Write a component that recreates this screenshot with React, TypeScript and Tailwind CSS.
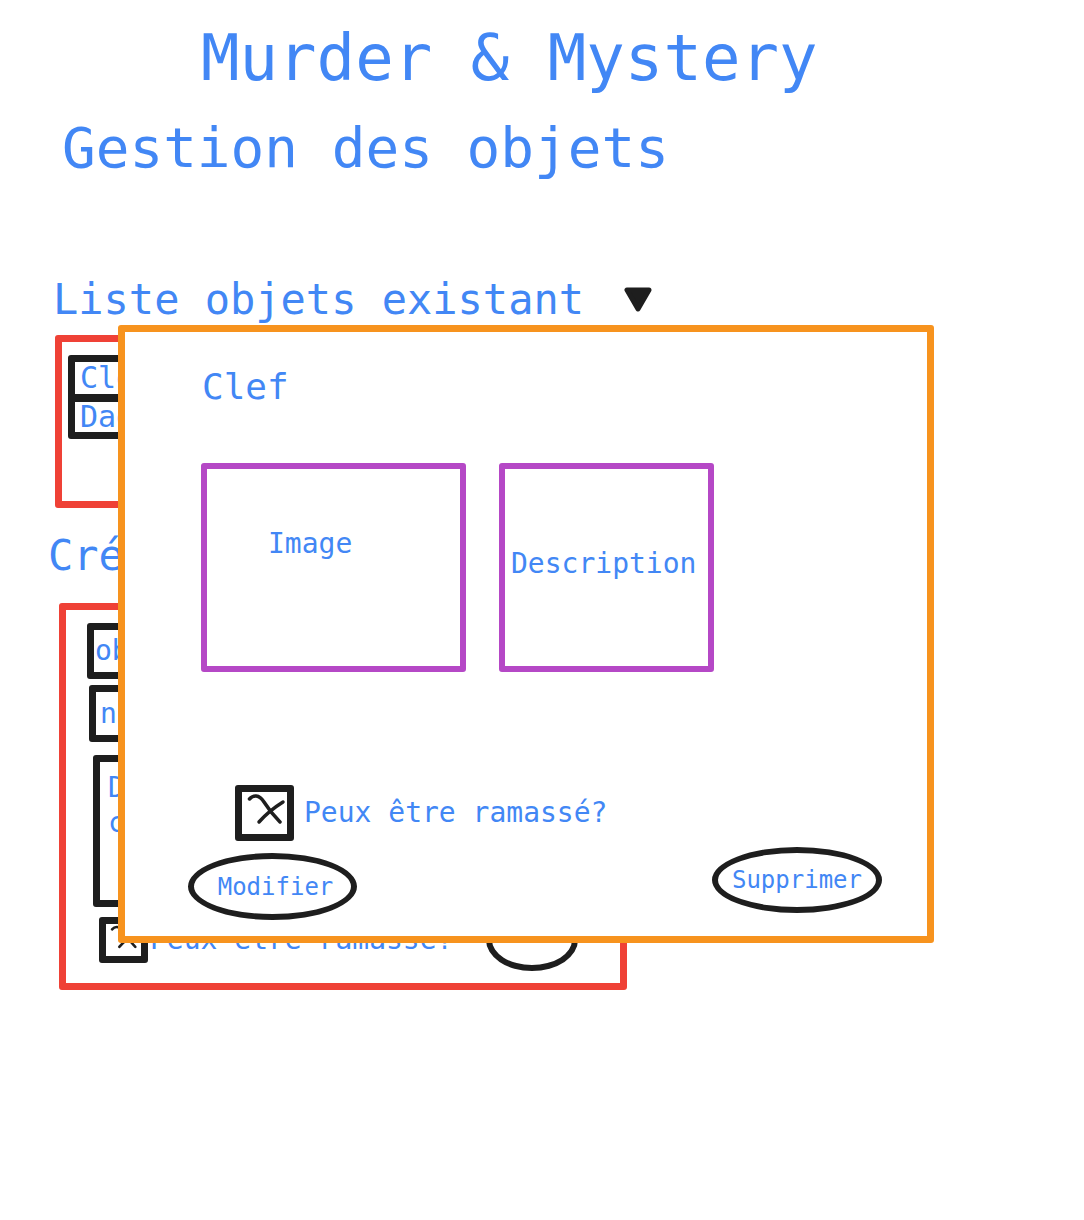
import React from 'react';

// hand-drawn tick used in the "Peux être ramassé?" boxes
const CrossMark = () => (
  <svg viewBox="0 0 45 42" className="h-full w-full" fill="none" stroke="#1e1e1e" strokeWidth={3.5} strokeLinecap="round">
    <path d="M7.5 7C11 3 17 2 22 10S33 25 38 30" />
    <path d="M41 10C33 15 25 21 17 30" />
  </svg>
);

const DropArrow = () => (
  <svg width="28" height="25" viewBox="0 0 28 25" className="ml-[40px] mt-[-2px]">
    <path d="M3 3H25L14 22Z" fill="#1e1e1e" stroke="#1e1e1e" strokeWidth={5} strokeLinejoin="round" />
  </svg>
);

export default function App() {
  return (
    <div className="relative h-[1220px] w-[1084px] overflow-hidden bg-white pt-[26px] font-['DejaVu_Sans_Mono',monospace] text-[#4287f5]">
      <h1 className="ml-[201px] text-[64px] leading-none">Murder &amp; Mystery</h1>
      <h2 className="ml-[62px] mt-[30px] text-[56px] leading-none">Gestion des objets</h2>

      {/* liste des objets */}
      <div className="ml-[53px] mt-[103px] flex items-center text-[42px] leading-none">
        <span>Liste objets existant</span>
        <DropArrow />
      </div>
      <div className="ml-[55px] mt-[14px] h-[173px] w-[500px] rounded-[3px] border-[7px] border-[#ef4136] pl-[6px] pt-[13px]">
        <div className="w-[300px] rounded-[3px] border-[7px] border-[#1e1e1e] text-[30px]">
          <div className="h-[32px] pl-[5px] leading-[32px]">Clef</div>
          <div className="h-[38px] border-t-[8px] border-[#1e1e1e] pl-[5px] leading-[30px]">Dague</div>
        </div>
      </div>

      {/* création */}
      <h2 className="ml-[48px] mt-[27px] text-[42px] leading-none">Créer</h2>
      <div className="ml-[59px] mt-[26px] flex h-[387px] w-[568px] flex-col items-start rounded-[3px] border-[7px] border-[#ef4136] text-[28px]">
        <div className="ml-[21px] mt-[13px] flex h-[56px] w-[260px] items-center rounded-[3px] border-[7px] border-[#1e1e1e] pl-[1px]">objet</div>
        <div className="ml-[23px] mt-[6px] flex h-[57px] w-[260px] items-center rounded-[3px] border-[7px] border-[#1e1e1e] pl-[4px]">nom</div>
        <div className="ml-[27px] mt-[13px] h-[152px] w-[300px] rounded-[3px] border-[7px] border-[#1e1e1e] pl-[8px] pt-[8px] leading-[35px]">
          <div>Description</div>
          <div>courte</div>
        </div>
        <div className="ml-[33px] mt-[2px] flex h-[62px] items-center">
          <div className="h-[46px] w-[49px] rounded-[3px] border-[7px] border-[#1e1e1e]">
            <CrossMark />
          </div>
          <span className="ml-[2px] leading-none">Peux être ramassé?</span>
          <div className="ml-[33px] h-[62px] w-[92px] rounded-[50%] border-[6px] border-[#1e1e1e]" />
        </div>
      </div>

      {/* fenêtre de l'objet sélectionné */}
      <div className="absolute left-[118px] top-[325px] flex h-[618px] w-[816px] flex-col rounded-[3px] border-[7px] border-[#f7931e] bg-white">
        <div className="ml-[77px] mt-[37px] text-[36px] leading-none">Clef</div>
        <div className="ml-[76px] mt-[58px] flex gap-[33px] text-[28px] leading-none">
          <div className="h-[209px] w-[265px] rounded-[3px] border-[6px] border-[#b548c6] pl-[61px] pt-[61px]">Image</div>
          <div className="h-[209px] w-[215px] rounded-[3px] border-[6px] border-[#b548c6] pl-[6px] pt-[81px]">Description</div>
        </div>
        <div className="ml-[110px] mt-[113px] flex items-center">
          <div className="h-[56px] w-[59px] rounded-[3px] border-[7px] border-[#1e1e1e]">
            <CrossMark />
          </div>
          <span className="ml-[10px] text-[28px] leading-none">Peux être ramassé?</span>
        </div>
        <div className="mt-[6px] flex items-start text-[24px] leading-none">
          <button className="ml-[63px] mt-[6px] flex h-[67px] w-[169px] items-center justify-center rounded-[50%] border-[6px] border-[#1e1e1e] pl-[6px]">
            Modifier
          </button>
          <button className="ml-auto mr-[45px] flex h-[66px] w-[170px] items-center justify-center rounded-[50%] border-[6px] border-[#1e1e1e]">
            Supprimer
          </button>
        </div>
      </div>
    </div>
  );
}
